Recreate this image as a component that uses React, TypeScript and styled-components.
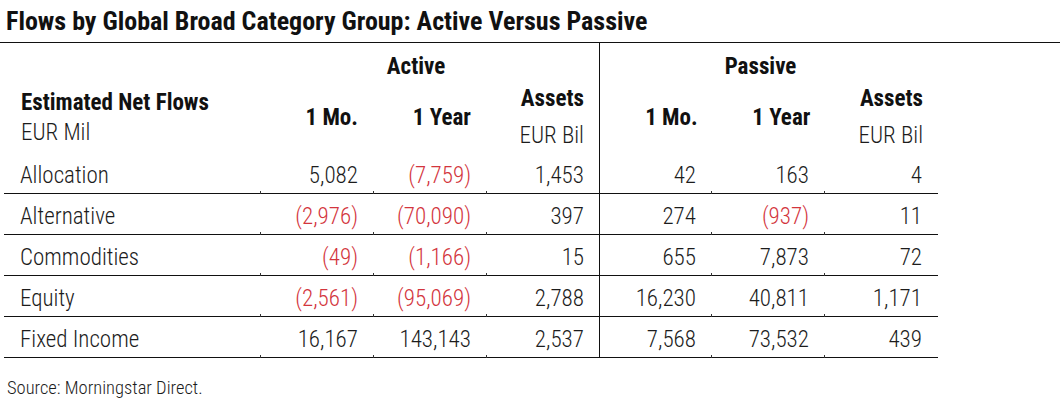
import React from "react";
import styled, { createGlobalStyle } from "styled-components";

const GlobalStyle = createGlobalStyle`
  body {
    margin: 0;
    background: #ffffff;
    font-family: Roboto, "Liberation Sans", sans-serif;
    font-stretch: 82%;
    color: #1c1c1c;
  }
`;

const Page = styled.div`
  width: 1060px;
  height: 408px;
  overflow: hidden;
  background: #ffffff;
`;

const Title = styled.h1`
  margin: 0;
  padding: 6px 0 0 6px;
  height: 43px;
  box-sizing: border-box;
  border-bottom: 1px solid #111;
  font-size: 26px;
  font-weight: 700;
  font-stretch: 78%;
  line-height: 31px;
  color: #111;
  white-space: nowrap;
`;

const Table = styled.div`
  margin-left: 4px;
  width: 934px;
  display: flex;
  flex-direction: column;
`;

const HeaderRow = styled.div`
  display: flex;
  height: 110px;
`;

const LabelHead = styled.div`
  width: 256px;
  box-sizing: border-box;
  padding: 45px 0 0 17px;
  line-height: 30px;
`;

const HeadBold = styled.div`
  font-size: 23px;
  font-weight: 700;
  font-stretch: 84%;
  color: #111;
`;

const HeadUnit = styled.div`
  font-size: 23px;
  font-weight: 300;
  color: #1c1c1c;
`;

const Group = styled.div<{ $divider?: boolean }>`
  display: flex;
  flex-direction: column;
  width: 339px;
  box-sizing: border-box;
  border-left: ${(p) => (p.$divider ? "1px solid #111" : "none")};
`;

const GroupTitle = styled.div<{ $inset: number }>`
  height: 44px;
  box-sizing: border-box;
  padding: 11px ${(p) => p.$inset}px 0 0;
  text-align: center;
  font-size: 23px;
  font-weight: 700;
  font-stretch: 84%;
  line-height: 26px;
  color: #111;
`;

const ColumnHeads = styled.div`
  display: flex;
  flex: 1;
`;

const ColumnHead = styled.div`
  width: 113px;
  box-sizing: border-box;
  padding: 0 15px 2px 0;
  display: flex;
  flex-direction: column;
  justify-content: center;
  align-items: flex-end;
  line-height: 37px;
`;

const Row = styled.div`
  display: flex;
  height: 41px;
  box-sizing: border-box;
  border-bottom: 1px solid #111;
`;

const LabelCell = styled.div`
  width: 256px;
  box-sizing: border-box;
  padding: 0 0 4px 16px;
  display: flex;
  align-items: flex-end;
  font-size: 23px;
  font-weight: 300;
  line-height: 27px;
  color: #1c1c1c;
`;

const NumCell = styled.div<{ $neg?: boolean; $divider?: boolean }>`
  position: relative;
  width: ${(p) => (p.$divider ? "112px" : "113px")};
  box-sizing: border-box;
  padding: 0 15px 4px 0;
  display: flex;
  align-items: flex-end;
  justify-content: flex-end;
  font-size: 23px;
  font-weight: 300;
  line-height: 27px;
  color: ${(p) => (p.$neg ? "#d3353d" : "#1c1c1c")};
  border-left: ${(p) => (p.$divider ? "1px solid #111" : "none")};

  &::before {
    content: "";
    display: ${(p) => (p.$divider ? "none" : "block")};
    position: absolute;
    left: 0;
    bottom: -1px;
    width: 1px;
    height: 3px;
    background: #333;
  }
`;

const Source = styled.div`
  padding: 19px 0 0 7px;
  font-size: 18.5px;
  font-weight: 300;
  line-height: 22px;
  color: #1c1c1c;
`;

type Rec = { label: string; values: string[] };

const rows: Rec[] = [
  { label: "Allocation", values: ["5,082", "(7,759)", "1,453", "42", "163", "4"] },
  { label: "Alternative", values: ["(2,976)", "(70,090)", "397", "274", "(937)", "11"] },
  { label: "Commodities", values: ["(49)", "(1,166)", "15", "655", "7,873", "72"] },
  { label: "Equity", values: ["(2,561)", "(95,069)", "2,788", "16,230", "40,811", "1,171"] },
  { label: "Fixed Income", values: ["16,167", "143,143", "2,537", "7,568", "73,532", "439"] },
];

const Heads: React.FC = () => (
  <ColumnHeads>
    <ColumnHead>
      <HeadBold>1 Mo.</HeadBold>
    </ColumnHead>
    <ColumnHead>
      <HeadBold>1 Year</HeadBold>
    </ColumnHead>
    <ColumnHead>
      <HeadBold>Assets</HeadBold>
      <HeadUnit>EUR Bil</HeadUnit>
    </ColumnHead>
  </ColumnHeads>
);

const App: React.FC = () => {
  return (
    <Page>
      <GlobalStyle />
      <Title>Flows by Global Broad Category Group: Active Versus Passive</Title>
      <Table>
        <HeaderRow>
          <LabelHead>
            <HeadBold>Estimated Net Flows</HeadBold>
            <HeadUnit>EUR Mil</HeadUnit>
          </LabelHead>
          <Group>
            <GroupTitle $inset={27}>Active</GroupTitle>
            <Heads />
          </Group>
          <Group $divider>
            <GroupTitle $inset={17}>Passive</GroupTitle>
            <Heads />
          </Group>
        </HeaderRow>
        {rows.map((r) => (
          <Row key={r.label}>
            <LabelCell>{r.label}</LabelCell>
            {r.values.map((v, i) => (
              <NumCell key={i} $neg={v.startsWith("(")} $divider={i === 3}>
                {v}
              </NumCell>
            ))}
          </Row>
        ))}
      </Table>
      <Source>Source: Morningstar Direct.</Source>
    </Page>
  );
};

export default App;
